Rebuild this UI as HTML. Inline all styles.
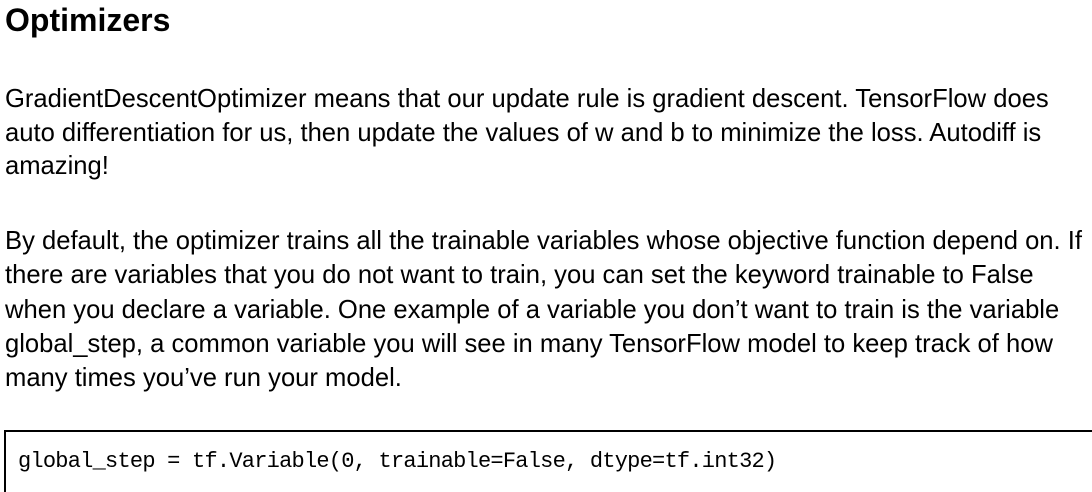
<!DOCTYPE html>
<html><head><style>
body{margin:0;width:1092px;height:479px;background:#fff;overflow:hidden;position:relative;font-family:"Liberation Sans",Arial,sans-serif;color:#000}
h1{position:absolute;left:5px;top:1px;margin:0;font-size:32px;line-height:38px;font-weight:bold}
p{position:absolute;left:5px;margin:0;font-size:25.6px;line-height:34px;width:1085px;white-space:nowrap}
.box{position:absolute;left:4px;top:430px;width:1100px;height:60px;border-top:2px solid #000;border-left:2px solid #000}
.code{position:absolute;left:18px;top:449px;font-family:"Liberation Mono",monospace;font-size:22px;line-height:26px;letter-spacing:-0.77px;white-space:pre}
</style></head><body>
<h1>Optimizers</h1>
<p style="top:83px;line-height:33.5px">GradientDescentOptimizer means that our update rule is gradient descent. TensorFlow does<br>auto differentiation for us, then update the values of w and b to minimize the loss. Autodiff is<br>amazing!</p>
<p style="top:224px;line-height:34.3px">By default, the optimizer trains all the trainable variables whose objective function depend on. If<br>there are variables that you do not want to train, you can set the keyword trainable to False<br>when you declare a variable. One example of a variable you don’t want to train is the variable<br>global_step, a common variable you will see in many TensorFlow model to keep track of how<br>many times you’ve run your model.</p>
<div class="box"></div>
<div class="code">global_step = tf.Variable(0, trainable=False, dtype=tf.int32)</div>
</body></html>
